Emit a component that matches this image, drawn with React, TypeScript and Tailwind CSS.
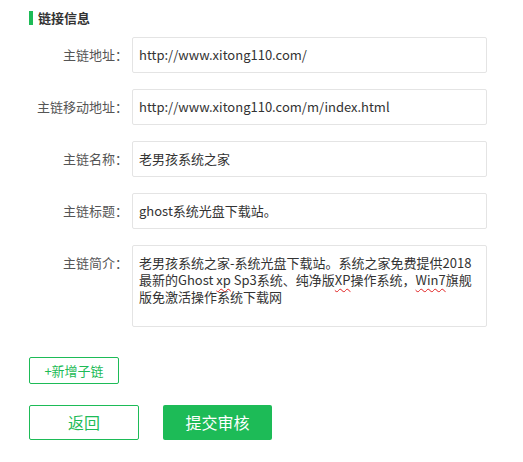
import type { ReactNode } from "react"

const font = { fontFamily: '"Microsoft YaHei", "Noto Sans CJK SC", sans-serif' }

function Row({ label, children, top }: { label: string; children: ReactNode; top?: boolean }) {
  return (
    <div className={`flex ${top ? "items-start" : "items-center"}`}>
      <div className={`w-[132px] shrink-0 pr-[4px] text-right text-[13px] text-[#555] ${top ? "pt-[8px]" : ""}`}>
        {label}
      </div>
      <div className="flex-1">{children}</div>
    </div>
  )
}

function Field({ value }: { value: string }) {
  return (
    <div className="flex h-[36px] w-[355px] items-center rounded-[2px] border border-[#e4e4e4] bg-white pl-[6px] text-[13px] text-[#333]">
      {value}
    </div>
  )
}

const Squiggle = ({ children }: { children: ReactNode }) => (
  <span className="underline decoration-wavy decoration-[#e02020] decoration-1 underline-offset-[3px]">{children}</span>
)

export default function App() {
  return (
    <div className="min-h-[462px] w-[523px] bg-white" style={font}>
      <div className="flex items-center pl-[29px] pt-[8px]">
        <span className="h-[14px] w-[4px] bg-[#1dbb57]" />
        <span className="ml-[5px] text-[13px] font-bold text-[#333]">链接信息</span>
      </div>

      <div className="mt-[9px] flex flex-col gap-[16px]">
        <Row label="主链地址：">
          <Field value="http://www.xitong110.com/" />
        </Row>
        <Row label="主链移动地址：">
          <Field value="http://www.xitong110.com/m/index.html" />
        </Row>
        <Row label="主链名称：">
          <Field value="老男孩系统之家" />
        </Row>
        <Row label="主链标题：">
          <Field value="ghost系统光盘下载站。" />
        </Row>
        <Row label="主链简介：" top>
          <div className="h-[82px] w-[355px] rounded-[2px] border border-[#e4e4e4] bg-white px-[6px] pt-[8px] text-[13px] leading-[17px] text-[#333]">
            老男孩系统之家-系统光盘下载站。系统之家免费提供2018最新的Ghost <Squiggle>xp</Squiggle> Sp3系统、纯净版
            <Squiggle>XP</Squiggle>操作系统，<Squiggle>Win7</Squiggle>旗舰版免激活操作系统下载网
          </div>
        </Row>
      </div>

      <div className="pl-[29px] pt-[30px]">
        <button className="h-[27px] w-[90px] rounded-[2px] border border-[#1dbb57] bg-white text-[13px] text-[#1dbb57]">
          +新增子链
        </button>
      </div>

      <div className="flex gap-[24px] pl-[29px] pt-[21px]">
        <button className="h-[35px] w-[110px] rounded-[2px] border border-[#1dbb57] bg-white text-[16px] text-[#1dbb57]">
          返回
        </button>
        <button className="h-[35px] w-[109px] rounded-[2px] bg-[#1dbb57] text-[16px] text-white">提交审核</button>
      </div>
    </div>
  )
}
